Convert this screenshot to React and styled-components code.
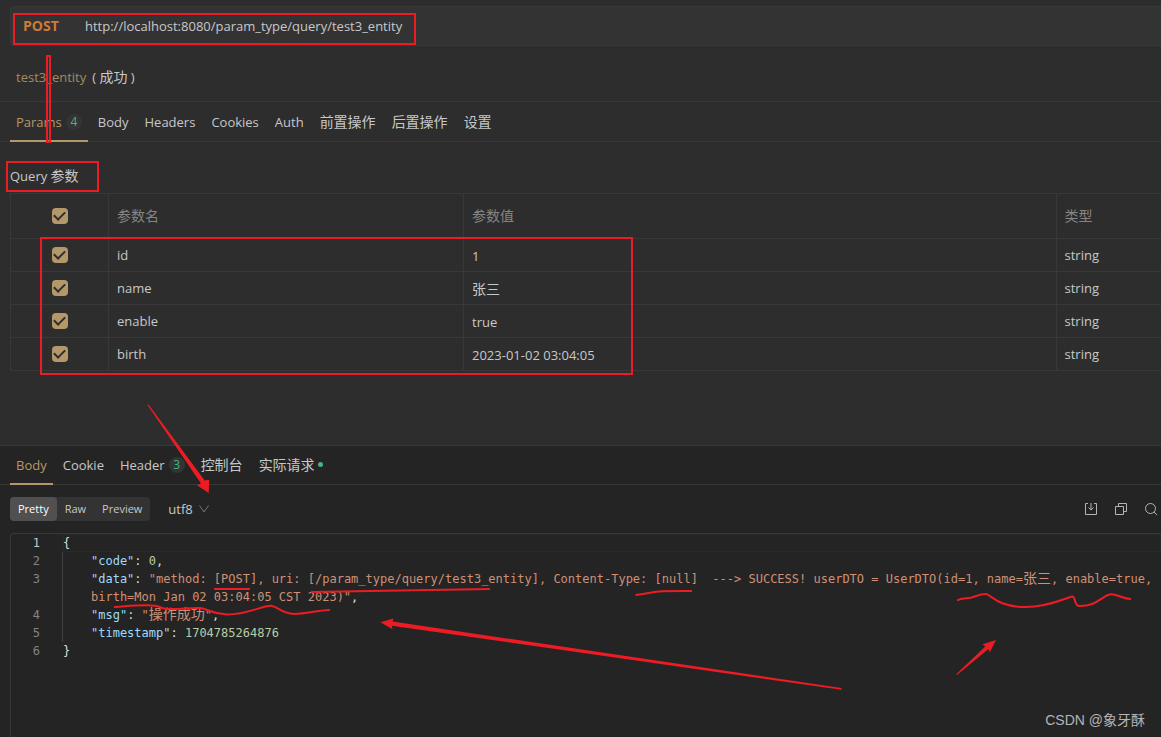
import React, { useState } from 'react'
import styled, { createGlobalStyle } from 'styled-components'

const requestTabs = [
  { key: 'params', label: 'Params', count: 4 },
  { key: 'body', label: 'Body' },
  { key: 'headers', label: 'Headers' },
  { key: 'cookies', label: 'Cookies' },
  { key: 'auth', label: 'Auth' },
  { key: 'pre', label: '前置操作', cjk: true },
  { key: 'post', label: '后置操作', cjk: true },
  { key: 'settings', label: '设置', cjk: true },
]

const responseTabs = [
  { key: 'body', label: 'Body' },
  { key: 'cookie', label: 'Cookie' },
  { key: 'header', label: 'Header', count: 3 },
  { key: 'console', label: '控制台', cjk: true },
  { key: 'actual', label: '实际请求', cjk: true, dot: true },
]

const params = [
  { name: 'id', value: '1', type: 'string' },
  { name: 'name', value: '张三', type: 'string', cjk: true },
  { name: 'enable', value: 'true', type: 'string' },
  { name: 'birth', value: '2023-01-02 03:04:05', type: 'string' },
]

function TabBar({ tabs, initial, compact }) {
  const [active, setActive] = useState(initial)
  return (
    <Tabs role="tablist" $compact={compact}>
      {tabs.map((tab) => (
        <Tab
          key={tab.key}
          type="button"
          role="tab"
          aria-selected={active === tab.key}
          $active={active === tab.key}
          $cjk={tab.cjk}
          $compact={compact}
          onClick={() => setActive(tab.key)}
        >
          {tab.label}
          {tab.count && <Count>{tab.count}</Count>}
          {tab.dot && <Dot />}
        </Tab>
      ))}
    </Tabs>
  )
}

function ParamTable() {
  return (
    <Table>
      <colgroup>
        <CheckCol />
        <NameCol />
        <col />
        <TypeCol />
      </colgroup>
      <thead>
        <tr>
          <HeadCell $center><Checkbox aria-label="全选" defaultChecked /></HeadCell>
          <HeadCell>参数名</HeadCell>
          <HeadCell>参数值</HeadCell>
          <HeadCell>类型</HeadCell>
        </tr>
      </thead>
      <tbody>
        {params.map((p) => (
          <tr key={p.name}>
            <Cell $center><Checkbox aria-label={p.name} defaultChecked /></Cell>
            <Cell>{p.name}</Cell>
            <Cell><ValueInput aria-label={p.name} defaultValue={p.value} $cjk={p.cjk} /></Cell>
            <Cell>{p.type}</Cell>
          </tr>
        ))}
      </tbody>
    </Table>
  )
}

function ResponseCode() {
  return (
    <Editor>
      <Line>
        <LineNo $current>1</LineNo>
        <Code $current>{'{'}</Code>
      </Line>
      <Line>
        <LineNo>2</LineNo>
        <Code $nested><Key>"code"</Key>: <Num>0</Num>,</Code>
      </Line>
      <Line>
        <LineNo>3</LineNo>
        <Code $nested>
          <Key>"data"</Key>{': '}
          <Str>
            {'"method: [POST], uri: [/param_type/query/test3_entity], Content-Type: [null]  ---> SUCCESS! userDTO = UserDTO(id=1, name='}
            <Han>张三</Han>
            {', enable=true, birth=Mon Jan 02 03:04:05 CST 2023)"'}
          </Str>,
        </Code>
      </Line>
      <Line>
        <LineNo>4</LineNo>
        <Code $nested><Key>"msg"</Key>: <Str>"<Han>操作成功</Han>"</Str>,</Code>
      </Line>
      <Line>
        <LineNo>5</LineNo>
        <Code $nested><Key>"timestamp"</Key>: <Num>1704785264876</Num></Code>
      </Line>
      <Line>
        <LineNo>6</LineNo>
        <Code>{'}'}</Code>
      </Line>
    </Editor>
  )
}

// hand-drawn red marks over the page
function Marks() {
  return (
    <MarkLayer width="1161" height="737" viewBox="0 0 1161 737" aria-hidden="true">
      <g fill="none" stroke="#ed1c24" strokeWidth="2">
        <rect x="14" y="14" width="401" height="30" />
        <rect x="47" y="56" width="3" height="86" />
        <rect x="7" y="162" width="91" height="29" />
        <rect x="41" y="238" width="591" height="136" />
        <path d="M214 589H250" />
        <path d="M311 592C360 591 430 590 490 589" />
        <path d="M635.500 595C646 594.500 652 591.500 662 591.200S681 591 692 591" />
        <path d="M114 607C128 606 145 604.500 155 605.700C161 606.500 160 608.500 168 609C180 609.500 190 607.500 200 608C208 609 212 614 227 614.500C248 614.500 262 605.500 271 605.800C279 607 281 613.500 294 614C308 613.500 316 610.500 330 610" />
        <path d="M957 600.500C962 597.500 966 598.800 971 597.700C977 596 982 593.500 987 594.200C992 596.500 1000 607 1025 607C1050 607 1065 598 1072.500 596.500C1076 597.500 1074 605.500 1079 606C1098 606.500 1103 594 1112 594.300C1119 595 1123 599 1131 599" />
      </g>
      <g fill="#ed1c24">
        <path d="M148.500 404.500L204.700 480.500L209.200 479.700L208.700 493L197 485.200L201 483.500L147.500 405Z" />
        <path d="M380.500 622.300L393.500 618.500L392.500 621.500L841.500 688L841.500 689.700L392 625.700L392.300 629.300Z" />
        <path d="M996 640L989.700 652.500L988.500 649L957 675L956.500 674L985.300 646.500L982.500 644.300Z" />
      </g>
    </MarkLayer>
  )
}

export default function App() {
  return (
    <Page>
      <GlobalStyle />
      <Request>
        <UrlBar>
          <Method type="button">POST</Method>
          <UrlInput aria-label="URL" defaultValue="http://localhost:8080/param_type/query/test3_entity" />
        </UrlBar>
        <CaseTitle>
          <a href="#test3_entity">test3_entity</a>
          <span>( <Han>成功</Han> )</span>
        </CaseTitle>
        <TabBar tabs={requestTabs} initial="params" />
        <SectionTitle>Query <Han>参数</Han></SectionTitle>
        <ParamTable />
      </Request>
      <Response>
        <TabBar tabs={responseTabs} initial="body" compact />
        <Toolbar>
          <Segments>
            <Segment type="button" $active>Pretty</Segment>
            <Segment type="button">Raw</Segment>
            <Segment type="button">Preview</Segment>
          </Segments>
          <Encoding>
            <select aria-label="编码" defaultValue="utf8">
              <option value="utf8">utf8</option>
            </select>
            <svg width="12" height="12" viewBox="0 0 12 12" fill="none" stroke="#777">
              <path d="M1.500 2.500L6 9L10.500 2.500" />
            </svg>
          </Encoding>
          <Actions>
            <IconButton type="button" aria-label="下载">
              <svg width="14" height="14" viewBox="0 0 14 14">
                <path d="M4 1.500H1.500V12.500H12.500V1.500H10M7 1V8M4.500 5.500L7 8L9.500 5.500" />
              </svg>
            </IconButton>
            <IconButton type="button" aria-label="复制">
              <svg width="14" height="14" viewBox="0 0 14 14">
                <path d="M1.500 4.500H9.500V12.500H1.500ZM4.500 4V1.500H12.500V9.500H10" />
              </svg>
            </IconButton>
            <IconButton type="button" aria-label="搜索">
              <svg width="14" height="14" viewBox="0 0 14 14">
                <circle cx="6.500" cy="6.500" r="5" />
                <path d="M10 10L13 13" />
              </svg>
            </IconButton>
          </Actions>
        </Toolbar>
        <ResponseCode />
      </Response>
      <Marks />
      <Watermark>CSDN @象牙酥</Watermark>
    </Page>
  )
}

const GlobalStyle = createGlobalStyle`
  * {
    box-sizing: border-box;
  }
  body {
    margin: 0;
    background: #242424;
    overflow-x: hidden;
  }
  button, input, select {
    font: inherit;
    color: inherit;
    background: none;
    border: 0;
    padding: 0;
    margin: 0;
    outline: none;
  }
`

const Page = styled.div`
  position: relative;
  display: flex;
  flex-direction: column;
  min-height: 100vh;
  background: #2d2d2d;
  color: #c8c8c8;
  font-family: "Open Sans", "Noto Sans CJK SC", sans-serif;
  font-size: 13px;
  line-height: 20px;
`

const Han = styled.span`
  font-family: "Noto Sans CJK SC", sans-serif;
  font-size: 14px;
  line-height: 0;
`

const Request = styled.section`
  padding: 6px 0 74px;
`

const UrlBar = styled.div`
  display: flex;
  align-items: center;
  height: 40px;
  margin-left: 10px;
  padding-left: 12px;
  background: #333;
  border: 1px solid #383838;
  border-right: 0;
  border-radius: 4px 0 0 4px;
`

const Method = styled.button`
  width: 62px;
  text-align: left;
  font-size: 14px;
  font-weight: 700;
  color: #cf7a34;
`

const UrlInput = styled.input`
  flex: 1;
`

const CaseTitle = styled.div`
  display: flex;
  align-items: center;
  gap: 6px;
  height: 56px;
  padding: 6px 16px 0;
  border-bottom: 1px solid #383838;
  a {
    color: #a58a61;
    text-decoration: none;
  }
`

const Tabs = styled.div`
  display: flex;
  gap: 4px;
  height: ${({ $compact }) => ($compact ? '39px' : '40px')};
  padding-left: 10px;
  border-bottom: 1px solid #383838;
`

const Tab = styled.button`
  display: flex;
  align-items: center;
  height: calc(100% + 1px);
  padding: ${({ $compact }) => ($compact ? '0 6px' : '2px 6px 0')};
  font-size: ${({ $cjk }) => ($cjk ? '14px' : '13px')};
  color: ${({ $active }) => ($active ? '#b5986a' : '#c8c8c8')};
  border-bottom: 2px solid ${({ $active }) => ($active ? '#b5986a' : 'transparent')};
`

const Count = styled.span`
  width: 16px;
  height: 16px;
  margin-left: 4px;
  border-radius: 8px;
  background: #343434;
  color: #41b883;
  font-size: 12px;
  line-height: 16px;
  text-align: center;
`

const Dot = styled.span`
  width: 5px;
  height: 5px;
  margin-left: 3px;
  border-radius: 50%;
  background: #45b28a;
`

const SectionTitle = styled.div`
  padding: 24px 10px 7px;
`

const Table = styled.table`
  width: calc(100% - 10px);
  margin-left: 10px;
  table-layout: fixed;
  border-collapse: collapse;
`

const CheckCol = styled.col`
  width: 98px;
`

const NameCol = styled.col`
  width: 355px;
`

const TypeCol = styled.col`
  width: 105px;
`

const Cell = styled.td`
  height: 33px;
  padding: ${({ $center }) => ($center ? '0' : '0 8px')};
  border: 1px solid #383838;
  border-right: 0;
  text-align: ${({ $center }) => ($center ? 'center' : 'left')};
`

const HeadCell = styled(Cell).attrs({ as: 'th' })`
  height: 45px;
  color: #858585;
  font-size: 14px;
  font-weight: 400;
`

const Checkbox = styled.input.attrs({ type: 'checkbox' })`
  appearance: none;
  display: grid;
  place-items: center;
  width: 16px;
  height: 16px;
  margin: 0 auto;
  border-radius: 4px;
  background: #b5986a;
  &:checked::after {
    content: '';
    width: 9px;
    height: 5px;
    margin-bottom: 3px;
    border: solid #2d2d2d;
    border-width: 0 0 2px 2px;
    transform: rotate(-45deg);
  }
`

const ValueInput = styled.input`
  display: block;
  width: 100%;
  height: 20px;
  padding-top: 1px;
  font-size: ${({ $cjk }) => ($cjk ? '14px' : '13px')};
`

const Response = styled.section`
  display: flex;
  flex: 1;
  flex-direction: column;
  background: #242424;
  border-top: 1px solid #383838;
`

const Toolbar = styled.div`
  display: flex;
  align-items: center;
  padding: 12px 3px 12px 10px;
`

const Segments = styled.div`
  display: flex;
  border-radius: 4px;
  background: #333;
`

const Segment = styled.button`
  height: 24px;
  padding: 0 8px;
  border-radius: 4px;
  font-size: 11px;
  color: ${({ $active }) => ($active ? '#fff' : '#c8c8c8')};
  background: ${({ $active }) => ($active ? '#505050' : 'transparent')};
`

const Encoding = styled.label`
  display: flex;
  align-items: center;
  gap: 5px;
  margin-left: 18px;
  select {
    appearance: none;
  }
`

const Actions = styled.div`
  display: flex;
  gap: 16px;
  margin-left: auto;
`

const IconButton = styled.button`
  display: flex;
  svg {
    fill: none;
    stroke: #b4b4b4;
  }
`

const Editor = styled.div`
  flex: 1;
  margin-left: 10px;
  border: solid #383838;
  border-width: 1px 0 0 1px;
  border-radius: 4px 0 0 0;
  font-family: "DejaVu Sans Mono", "Noto Sans CJK SC", monospace;
  font-size: 12px;
  line-height: 18px;
`

const Line = styled.div`
  display: flex;
  padding-left: 11px;
`

const LineNo = styled.span`
  width: 18px;
  margin-right: 22px;
  text-align: right;
  color: ${({ $current }) => ($current ? '#c6c6c6' : '#858585')};
`

const Code = styled.code`
  flex: 1;
  padding-left: ${({ $nested }) => ($nested ? '28px' : '0')};
  padding-right: 4px;
  border-left: 1px solid ${({ $nested }) => ($nested ? '#404040' : 'transparent')};
  box-shadow: ${({ $current }) => ($current ? 'inset 0 0 0 1px #292929' : 'none')};
  color: #dcdcdc;
  font-family: inherit;
  white-space: pre-wrap;
`

const Key = styled.span`
  color: #9cdcfe;
`

const Str = styled.span`
  color: #ce9178;
`

const Num = styled.span`
  color: #b5cea8;
`

const MarkLayer = styled.svg`
  position: absolute;
  top: 0;
  left: 0;
  pointer-events: none;
`

const Watermark = styled.div`
  position: absolute;
  right: 16px;
  bottom: 7px;
  color: #b4b4b4;
  font-family: "Liberation Sans", "Noto Sans CJK SC", sans-serif;
  font-size: 14px;
`
